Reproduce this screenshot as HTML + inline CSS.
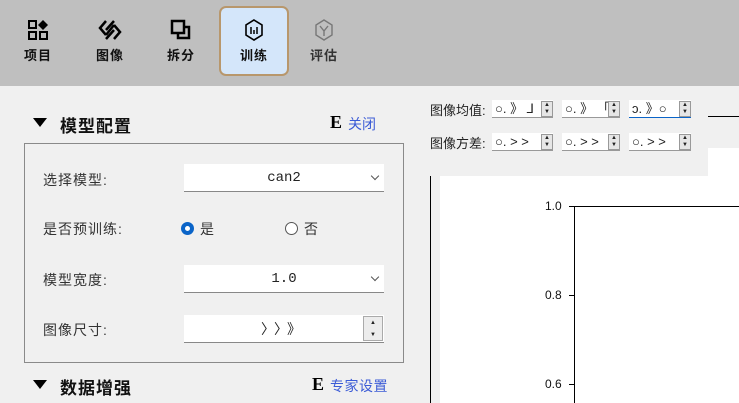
<!DOCTYPE html>
<html><head><meta charset="utf-8"><style>
*{margin:0;padding:0;box-sizing:border-box}
body{width:739px;height:403px;overflow:hidden;background:#f0f0f0;font-family:"Liberation Sans","Noto Sans CJK SC",sans-serif;position:relative;font-size:14px;color:#222}
.a{position:absolute}
.top{left:0;top:0;width:739px;height:86px;background:#bfbfbf}
.tb{position:absolute;top:6px;width:68px;height:68px;text-align:center;font-size:13px;font-weight:bold;color:#111;letter-spacing:1px}
.tb svg{display:block;margin:13px auto 4px}
.sel{background:#d4e6fa;border:2px solid #b8976c;border-radius:7px}
.hd{font-size:17px;font-weight:bold;color:#111;letter-spacing:1px}
.tri{width:0;height:0;border-left:7px solid transparent;border-right:7px solid transparent;border-top:9px solid #000}
.lnk{color:#3b5bd6;font-size:14px}
.E{font-family:"Liberation Serif",serif;font-weight:bold;font-size:18px;color:#000}
.grp{left:24px;top:143px;width:380px;height:220px;border:1px solid #8a8a8a}
.lbl{font-size:14px;color:#333;letter-spacing:1px}
.cb{background:#fff;border-bottom:1px solid #888;height:28px;text-align:center;line-height:28px;font-family:"Liberation Mono",monospace;font-size:14px}
.chev{position:absolute;right:6px;top:9px;width:6px;height:6px;border-right:1px solid #555;border-bottom:1px solid #555;transform:rotate(45deg)}
.sp{position:absolute;height:18px;background:#fff;border-bottom:1px solid #999;font-size:13px;line-height:18px;padding-left:3px;white-space:nowrap}
.sb{position:absolute;right:0;top:1px;width:12px;height:16px;background:#e6e6e6;border:1px solid #999;font-size:6px;line-height:7px;text-align:center}
.tk{position:absolute;font-size:12px;color:#111}
</style></head><body>
<div class="a top"></div>
<div class="tb" style="left:4px"><svg width="22" height="22" viewBox="0 0 22 22"><rect x="2" y="2" width="7" height="7" fill="none" stroke="#000" stroke-width="2"/><path d="M16 1l5 5-5 5-5-5z" fill="#000"/><rect x="2" y="13" width="7" height="7" fill="none" stroke="#000" stroke-width="2"/><rect x="13" y="13" width="7" height="7" fill="none" stroke="#000" stroke-width="2"/></svg>项目</div>
<div class="tb" style="left:76px"><svg width="24" height="22" viewBox="0 0 24 22"><path d="M8 2l-6 7 6 7M16 6l6 7-6 7M8 16l8-10M8 11l8-9M8 20l8-9" fill="none" stroke="#000" stroke-width="2.5"/></svg>图像</div>
<div class="tb" style="left:147px"><svg width="22" height="22" viewBox="0 0 22 22"><rect x="2" y="2" width="12" height="12" fill="none" stroke="#000" stroke-width="2.5"/><path d="M14 8h5v11H8v-5" fill="none" stroke="#000" stroke-width="2.5"/></svg>拆分</div>
<div class="tb sel" style="left:219px;top:6px;width:70px;height:70px"><svg width="20" height="22" viewBox="0 0 20 22" style="margin-top:11px"><path d="M10 1l8 5v10l-8 5-8-5V6z" fill="none" stroke="#000" stroke-width="1.6"/><path d="M7 8v7M10 11v4M13 8v7" stroke="#000" stroke-width="1.5"/></svg>训练</div>
<div class="tb" style="left:290px;color:#333"><svg width="20" height="22" viewBox="0 0 20 22"><path d="M10 1l8 5v10l-8 5-8-5V6z" fill="none" stroke="#777" stroke-width="1.4"/><path d="M6 7l4 5 4-5M10 12v5" fill="none" stroke="#777" stroke-width="1.4"/></svg>评估</div>

<div class="a tri" style="left:33px;top:118px"></div>
<div class="a hd" style="left:60px;top:112px">模型配置</div>
<div class="a E" style="left:330px;top:112px">E</div><div class="a lnk" style="left:348px;top:114px">关闭</div>
<div class="a grp"></div>
<div class="a lbl" style="left:43px;top:170px">选择模型:</div>
<div class="a cb" style="left:184px;top:164px;width:200px">can2<span class="chev"></span></div>
<div class="a lbl" style="left:43px;top:219px">是否预训练:</div>
<div class="a" style="left:181px;top:222px;width:13px;height:13px;border-radius:50%;border:4px solid #0a64c8;background:#fff"></div>
<div class="a lbl" style="left:200px;top:219px">是</div>
<div class="a" style="left:285px;top:222px;width:13px;height:13px;border-radius:50%;border:1px solid #555;background:#fff"></div>
<div class="a lbl" style="left:304px;top:219px">否</div>
<div class="a lbl" style="left:43px;top:270px">模型宽度:</div>
<div class="a cb" style="left:184px;top:265px;width:200px">1.0<span class="chev"></span></div>
<div class="a lbl" style="left:43px;top:320px">图像尺寸:</div>
<div class="a cb" style="left:184px;top:315px;width:200px;font-family:'Liberation Sans','Noto Sans CJK SC',sans-serif;letter-spacing:6px">〉〉》</div>
<div class="a" style="left:363px;top:316px;width:20px;height:25px;background:#ececec;border:1px solid #aaa;font-size:6px;text-align:center;line-height:12px">▲<br>▼</div>
<div class="a tri" style="left:33px;top:380px"></div>
<div class="a hd" style="left:60px;top:374px">数据增强</div>
<div class="a E" style="left:312px;top:374px">E</div><div class="a lnk" style="left:330px;top:376px;letter-spacing:0.5px">专家设置</div>

<div class="a" style="left:430px;top:100px;font-size:13px">图像均值:</div>
<div class="sp" style="left:492px;top:100px;width:61px">○. 》 ⅃<div class="sb">▲<br>▼</div></div>
<div class="sp" style="left:562px;top:100px;width:58px">○. 》 「<div class="sb">▲<br>▼</div></div>
<div class="sp" style="left:629px;top:100px;width:62px;border-bottom:1px solid #0a64c8">ↄ. 》○<div class="sb">▲<br>▼</div></div>
<div class="a" style="left:430px;top:133px;font-size:13px">图像方差:</div>
<div class="sp" style="left:492px;top:133px;width:61px">○. &gt; &gt;<div class="sb">▲<br>▼</div></div>
<div class="sp" style="left:562px;top:133px;width:58px">○. &gt; &gt;<div class="sb">▲<br>▼</div></div>
<div class="sp" style="left:629px;top:133px;width:62px">○. &gt; &gt;<div class="sb">▲<br>▼</div></div>
<div class="a" style="left:708px;top:116px;width:31px;height:1px;background:#000"></div>
<div class="a" style="left:708px;top:148px;width:31px;height:30px;background:#fff"></div>
<div class="a" style="left:440px;top:176px;width:299px;height:227px;background:#fff"></div>
<div class="a" style="left:430px;top:176px;width:1px;height:227px;background:#000"></div>
<div class="a" style="left:574px;top:206px;width:1px;height:197px;background:#000"></div>
<div class="a" style="left:574px;top:206px;width:165px;height:1px;background:#000"></div>
<div class="a" style="left:569px;top:206px;width:5px;height:1px;background:#000"></div>
<div class="a" style="left:569px;top:295px;width:5px;height:1px;background:#000"></div>
<div class="a" style="left:569px;top:384px;width:5px;height:1px;background:#000"></div>
<div class="tk" style="left:545px;top:199px">1.0</div>
<div class="tk" style="left:545px;top:288px">0.8</div>
<div class="tk" style="left:545px;top:377px">0.6</div>
</body></html>
